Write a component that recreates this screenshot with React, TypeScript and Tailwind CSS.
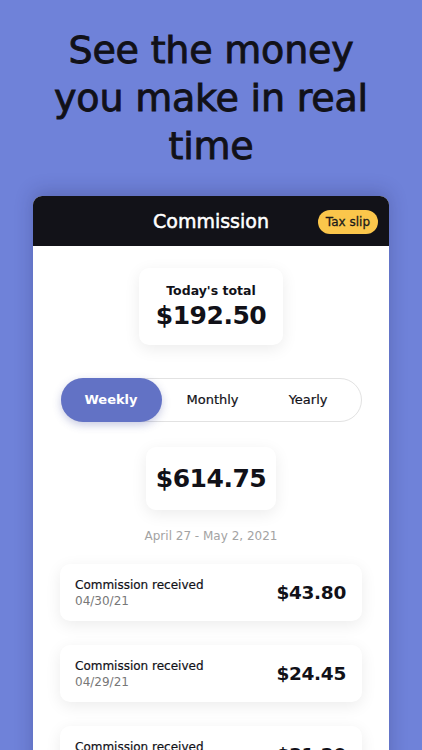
const entries = [
  { date: '04/30/21', amount: '$43.80' },
  { date: '04/29/21', amount: '$24.45' },
  { date: '04/28/21', amount: '$31.20' },
];

export default function App() {
  return (
    <div className="h-[750px] w-[422px] overflow-hidden bg-[#6f82d9] font-['DejaVu_Sans',sans-serif] text-[#111118]">
      <h1 className="pt-[26px] text-center text-[38px] font-normal leading-[48px] tracking-[-0.2px] [-webkit-text-stroke:0.9px_#111118]">
        See the money
        <br />
        you make in real
        <br />
        time
      </h1>

      <div className="mx-[33px] mt-[26px] h-[600px] overflow-hidden rounded-t-[9px] bg-white shadow-[0_-4px_18px_rgba(30,30,80,0.25)]">
        <div className="relative flex h-[50px] items-center justify-center bg-[#121218]">
          <span className="text-[19px] text-white [-webkit-text-stroke:0.5px_#ffffff]">Commission</span>
          <span className="absolute right-[11px] top-[14px] rounded-full bg-[#fbc64b] px-[8px] py-[4px] text-[12px] leading-[16px] text-[#1a1a1a] [-webkit-text-stroke:0.3px_#1a1a1a]">
            Tax slip
          </span>
        </div>

        <div className="flex flex-col items-center">
          <div className="mt-[22px] flex h-[77px] w-[144px] flex-col items-center justify-center rounded-[10px] bg-white shadow-[0_4px_16px_rgba(0,0,0,0.08)]">
            <span className="text-[12.5px] font-bold leading-[18px]">Today's total</span>
            <span className="text-[25px] font-bold leading-[32px] tracking-[-0.5px]">$192.50</span>
          </div>

          <div className="mt-[33px] flex h-[44px] w-[301px] items-center rounded-full border border-[#e2e2e2] bg-white">
            <div className="-ml-px flex h-[44px] w-[101px] items-center justify-center rounded-full bg-[#6272c5] text-[13px] font-bold text-white shadow-[0_3px_8px_rgba(70,80,160,0.3)]">
              Weekly
            </div>
            <div className="flex flex-1 items-center justify-around pr-2 text-[13px] [-webkit-text-stroke:0.2px_#111118]">
              <span>Monthly</span>
              <span>Yearly</span>
            </div>
          </div>

          <div className="mt-[25px] flex h-[63px] w-[130px] items-center justify-center rounded-[10px] bg-white shadow-[0_4px_16px_rgba(0,0,0,0.08)]">
            <span className="text-[25px] font-bold tracking-[-0.5px]">$614.75</span>
          </div>

          <p className="mt-[17px] text-[12px] text-[#a3a3a3]">April 27 - May 2, 2021</p>

          <div className="mt-[19px] flex w-[302px] flex-col gap-[24px]">
            {entries.map((e) => (
              <div
                key={e.date}
                className="flex h-[57px] items-center justify-between rounded-[10px] bg-white pl-[15px] pr-[16px] shadow-[0_4px_16px_rgba(0,0,0,0.08)]"
              >
                <div className="flex flex-col">
                  <span className="text-[12px] leading-[16px] [-webkit-text-stroke:0.2px_#111118]">Commission received</span>
                  <span className="text-[12px] leading-[16px] text-[#777]">{e.date}</span>
                </div>
                <span className="text-[18.5px] font-bold tracking-[-0.3px]">{e.amount}</span>
              </div>
            ))}
          </div>
        </div>
      </div>
    </div>
  );
}
